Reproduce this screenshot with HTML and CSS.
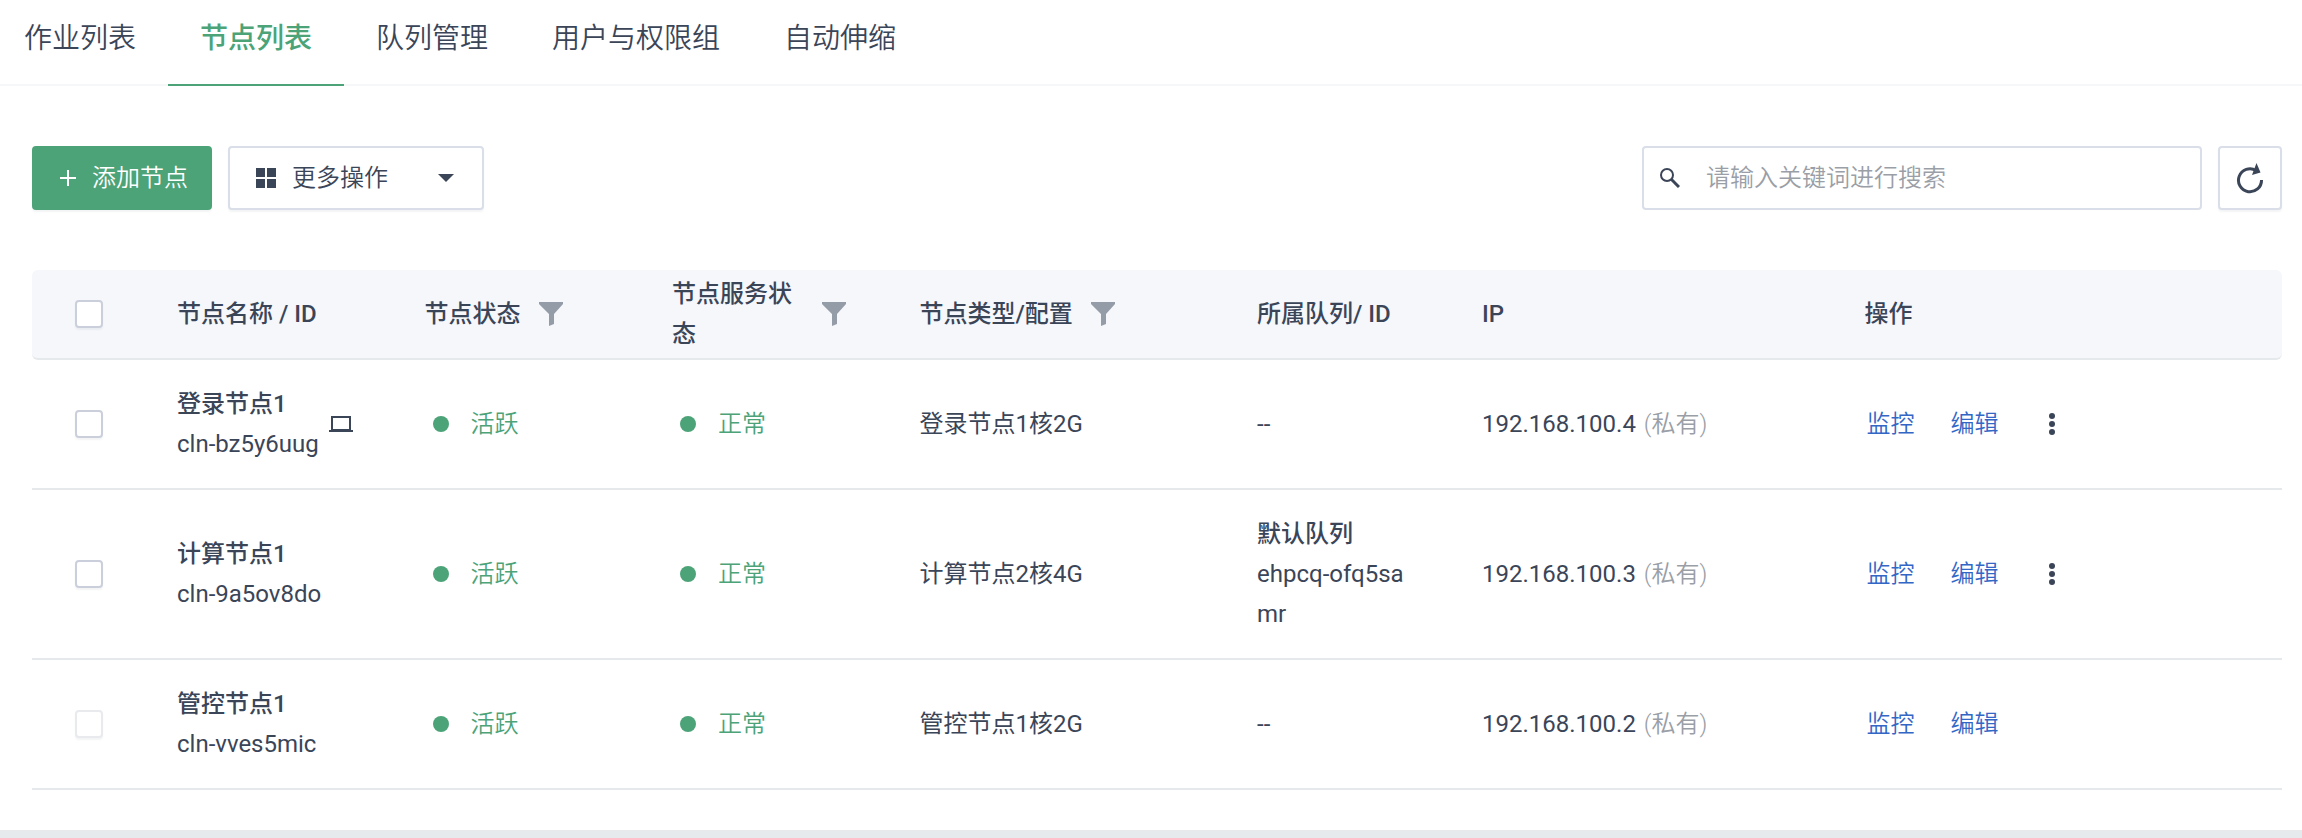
FILE: index.html
```html
<!DOCTYPE html>
<html lang="zh-CN">
<head>
    <meta charset="UTF-8">
    <title>节点列表</title>
    <link rel="stylesheet" href="styles.css">
</head>
<body>

    <nav class="tabs">
        <a class="tab" href="#jobs">作业列表</a>
        <a class="tab active" href="#nodes">节点列表</a>
        <a class="tab" href="#queues">队列管理</a>
        <a class="tab" href="#users">用户与权限组</a>
        <a class="tab" href="#scaling">自动伸缩</a>
    </nav>

    <main class="content">
        <div class="toolbar">
            <button class="btn btn-primary" type="button">
                <svg width="16" height="16" viewBox="0 0 16 16"><path d="M8 0v16M0 8h16" stroke="currentColor" stroke-width="2"/></svg>
                添加节点
            </button>
            <button class="btn btn-more" type="button">
                <svg width="20" height="20" viewBox="0 0 20 20" fill="currentColor"><path d="M0 0h9v9H0zM11 0h9v9h-9zM0 11h9v9H0zM11 11h9v9h-9z"/></svg>
                更多操作
                <svg class="caret" width="16" height="8" viewBox="0 0 16 8" fill="currentColor"><path d="M0 0h16L8 8z"/></svg>
            </button>
            <div class="search">
                <svg width="20" height="20" viewBox="0 0 20 20" fill="none" stroke="currentColor"><circle cx="7" cy="7" r="6" stroke-width="2"/><path d="M11.5 11.5l7.5 7.5" stroke-width="3"/></svg>
                <input type="text" placeholder="请输入关键词进行搜索" aria-label="搜索">
            </div>
            <button class="btn btn-refresh" type="button" aria-label="刷新">
                <svg width="28" height="32" viewBox="0 0 28 32"><path d="M20 8.500A11.500 11.500 0 1 0 25.500 18" fill="none" stroke="currentColor" stroke-width="3"/><path d="M20.500 1l4 9.500-8.500 2.500z" fill="currentColor"/></svg>
            </button>
        </div>

        <table class="nodes">
            <colgroup>
                <col class="col-check">
                <col class="col-name">
                <col class="col-status">
                <col class="col-status">
                <col class="col-type">
                <col class="col-queue">
                <col class="col-ip">
                <col>
            </colgroup>
            <thead>
                <tr>
                    <th class="check"><input type="checkbox" aria-label="全选"></th>
                    <th>节点名称 / ID</th>
                    <th>
                        <div class="filter">节点状态
                            <svg width="24" height="24" viewBox="0 0 24 24"><path d="M0 0h24v2l-9 10v10l-5 2V12L0 2z"/></svg>
                        </div>
                    </th>
                    <th>
                        <div class="filter"><span>节点服务状态</span>
                            <svg width="24" height="24" viewBox="0 0 24 24"><path d="M0 0h24v2l-9 10v10l-5 2V12L0 2z"/></svg>
                        </div>
                    </th>
                    <th>
                        <div class="filter">节点类型/配置
                            <svg width="24" height="24" viewBox="0 0 24 24"><path d="M0 0h24v2l-9 10v10l-5 2V12L0 2z"/></svg>
                        </div>
                    </th>
                    <th>所属队列/ ID</th>
                    <th>IP</th>
                    <th>操作</th>
                </tr>
            </thead>
            <tbody>
                <tr>
                    <td class="check"><input type="checkbox" aria-label="登录节点1"></td>
                    <td>
                        <div class="name">
                            <div><strong>登录节点1</strong><br>cln-bz5y6uug</div>
                            <svg width="24" height="18" viewBox="0 0 24 18"><path d="M3 2h18v13H3z" fill="none" stroke="currentColor" stroke-width="2"/><path d="M0 15h24v2H0z" fill="currentColor"/></svg>
                        </div>
                    </td>
                    <td><span class="status">活跃</span></td>
                    <td><span class="status">正常</span></td>
                    <td>登录节点1核2G</td>
                    <td>--</td>
                    <td>192.168.100.4 <span class="muted">(私有)</span></td>
                    <td>
                        <div class="actions">
                            <a href="#monitor">监控</a>
                            <a href="#edit">编辑</a>
                            <button class="dots" type="button" aria-label="更多"><svg width="6" height="24" viewBox="0 0 6 24" fill="currentColor"><circle cx="3" cy="4" r="3"/><circle cx="3" cy="12" r="3"/><circle cx="3" cy="20" r="3"/></svg></button>
                        </div>
                    </td>
                </tr>
                <tr>
                    <td class="check"><input type="checkbox" aria-label="计算节点1"></td>
                    <td><strong>计算节点1</strong><br>cln-9a5ov8do</td>
                    <td><span class="status">活跃</span></td>
                    <td><span class="status">正常</span></td>
                    <td>计算节点2核4G</td>
                    <td class="queue"><strong>默认队列</strong><br>ehpcq-ofq5samr</td>
                    <td>192.168.100.3 <span class="muted">(私有)</span></td>
                    <td>
                        <div class="actions">
                            <a href="#monitor">监控</a>
                            <a href="#edit">编辑</a>
                            <button class="dots" type="button" aria-label="更多"><svg width="6" height="24" viewBox="0 0 6 24" fill="currentColor"><circle cx="3" cy="4" r="3"/><circle cx="3" cy="12" r="3"/><circle cx="3" cy="20" r="3"/></svg></button>
                        </div>
                    </td>
                </tr>
                <tr>
                    <td class="check"><input type="checkbox" aria-label="管控节点1" disabled></td>
                    <td><strong>管控节点1</strong><br>cln-vves5mic</td>
                    <td><span class="status">活跃</span></td>
                    <td><span class="status">正常</span></td>
                    <td>管控节点1核2G</td>
                    <td>--</td>
                    <td>192.168.100.2 <span class="muted">(私有)</span></td>
                    <td>
                        <div class="actions">
                            <a href="#monitor">监控</a>
                            <a href="#edit">编辑</a>
                        </div>
                    </td>
                </tr>
            </tbody>
        </table>
    </main>

</body>
</html>
```
FILE: styles.css
```css
* {
    box-sizing: border-box;
}
body {
    margin: 0;
    background-color: #e6eaed;
    color: #3b4558;
    font-family: Roboto, "Noto Sans CJK SC", sans-serif;
    font-size: 24px;
    line-height: 40px;
}
a {
    color: #3367c6;
    text-decoration: none;
}
svg {
    display: block;
    flex: none;
}
strong {
    font-weight: 500;
}
.tabs {
    display: flex;
    height: 86px;
    background-color: #fff;
    border-bottom: 2px solid #f6f7f8;
    font-size: 28px;
}
.tab {
    padding: 19px 32px 25px;
    height: 86px;
    color: inherit;
    font-weight: 350;
}
.tab:first-child {
    padding-left: 24px;
}
.tab.active {
    color: #4ca378;
    font-weight: 500;
    border-bottom: 2px solid #4ca378;
}
.content {
    padding: 60px 20px 40px 32px;
    background-color: #fff;
}
.toolbar {
    display: flex;
    gap: 16px;
    margin-bottom: 60px;
}
.btn {
    display: flex;
    align-items: center;
    height: 64px;
    padding: 0 24px;
    border: 2px solid #d9dee8;
    border-radius: 4px;
    background-color: #fff;
    color: inherit;
    font: inherit;
    font-weight: 350;
    box-shadow: 0 2px 2px rgba(59, 69, 88, 0.06);
    cursor: pointer;
}
.btn-primary {
    gap: 16px;
    padding: 0 22px 0 26px;
    border-color: #4ca378;
    background-color: #4ca378;
    color: #fff;
}
.btn-more {
    gap: 16px;
    width: 256px;
    padding: 0 28px 0 26px;
}
.caret {
    margin-left: auto;
}
.search {
    display: flex;
    align-items: center;
    gap: 26px;
    width: 560px;
    height: 64px;
    margin-left: auto;
    padding: 0 16px;
    border: 2px solid #d9dee8;
    border-radius: 4px;
}
.search input {
    flex: 1;
    min-width: 0;
    padding: 0;
    border: none;
    outline: none;
    color: inherit;
    font: inherit;
    font-weight: 350;
}
.search input::placeholder {
    color: #9a9ea6;
}
.btn-refresh {
    justify-content: center;
    width: 64px;
    padding: 0;
}
.nodes {
    width: 100%;
    table-layout: fixed;
    border-collapse: separate;
    border-spacing: 0;
}
.col-check {
    width: 109px;
}
.col-name, .col-status {
    width: 11%;
}
.col-type {
    width: 15%;
}
.col-queue {
    width: 10%;
}
.col-ip {
    width: 17%;
}
th, td {
    padding: 24px 36px;
    border-bottom: 2px solid #e6e9ec;
    text-align: left;
    vertical-align: middle;
}
th {
    padding: 4px 38px 4px 36px;
    background-color: #f5f7fb;
    font-weight: 500;
}
th:first-child {
    border-radius: 6px 0 0 6px;
}
th:last-child {
    border-radius: 0 6px 6px 0;
}
.check {
    padding-left: 43px;
    padding-right: 0;
}
.check input {
    display: block;
    appearance: none;
    width: 28px;
    height: 28px;
    margin: 0;
    border: 2px solid #cbcfdb;
    border-radius: 4px;
    background-color: #fff;
    box-shadow: 0 2px 2px rgba(59, 69, 88, 0.06);
}
.check input:disabled {
    border-color: #e8eaed;
}
.filter {
    display: flex;
    align-items: center;
    gap: 18px;
}
.filter svg {
    fill: #949ca8;
}
.name {
    display: flex;
    align-items: center;
    justify-content: space-between;
}
.status {
    display: flex;
    align-items: center;
    gap: 22px;
    padding-left: 8px;
    color: #4ca378;
    font-weight: 350;
}
.status::before {
    content: "";
    width: 16px;
    height: 16px;
    border-radius: 50%;
    background-color: #4ca378;
}
.queue {
    word-break: break-all;
}
.muted {
    margin-left: 2px;
    color: #9a9ea6;
    font-weight: 350;
}
.actions {
    display: flex;
    align-items: center;
    gap: 36px;
    padding-left: 2px;
    font-weight: 350;
}
.dots {
    padding: 0 14px;
    border: none;
    background: none;
    color: inherit;
    cursor: pointer;
}
```
